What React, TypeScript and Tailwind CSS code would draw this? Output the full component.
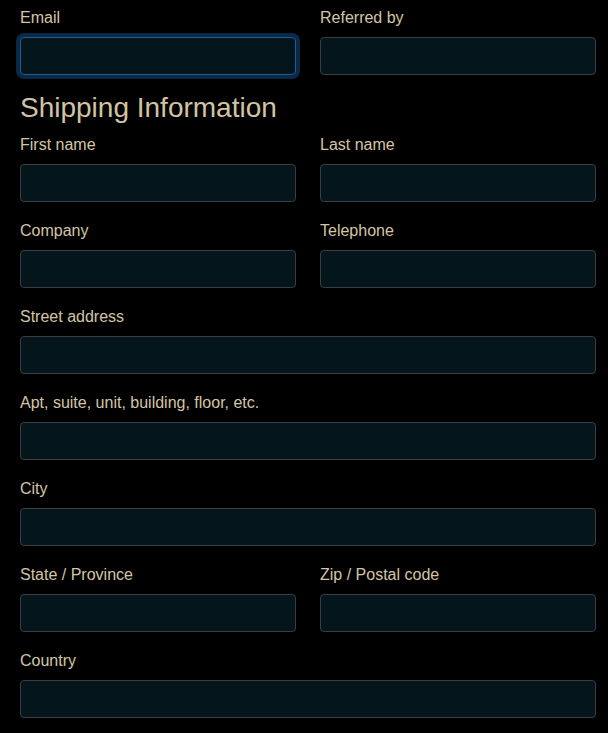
import React from 'react';

interface FieldProps {
  label: string;
  full?: boolean;
  focused?: boolean;
}

const Field: React.FC<FieldProps> = ({ label, full, focused }) => {
  return (
    <div className={full ? 'col-span-2 flex flex-col' : 'flex flex-col'}>
      <label className="block h-6 leading-6 text-base text-[#d4c5a5] mb-[7px]">{label}</label>
      <input
        type="text"
        className={
          focused
            ? 'h-[38px] w-full rounded-[4px] bg-[#04151b] border border-[#1a5c9c] ring-4 ring-[#0b2846] outline-none'
            : 'h-[38px] w-full rounded-[4px] bg-[#04151b] border border-[#3a3e41] outline-none'
        }
      />
    </div>
  );
};

export default function App() {
  return (
    <div
      className="min-h-[733px] bg-black pl-5 pr-3 pt-[6px] pb-4"
      style={{ fontFamily: '"Liberation Sans", Arial, sans-serif' }}
    >
      <div className="grid grid-cols-2 gap-x-6 gap-y-[17px]">
        <Field label="Email" focused />
        <Field label="Referred by" />
      </div>

      <h2 className="mt-[15px] mb-[7px] text-[28px] leading-[36px] text-[#d2c3a3]">Shipping Information</h2>

      <div className="grid grid-cols-2 gap-x-6 gap-y-[17px]">
        <Field label="First name" />
        <Field label="Last name" />
        <Field label="Company" />
        <Field label="Telephone" />
        <Field label="Street address" full />
        <Field label="Apt, suite, unit, building, floor, etc." full />
        <Field label="City" full />
        <Field label="State / Province" />
        <Field label="Zip / Postal code" />
        <Field label="Country" full />
      </div>
    </div>
  );
}
